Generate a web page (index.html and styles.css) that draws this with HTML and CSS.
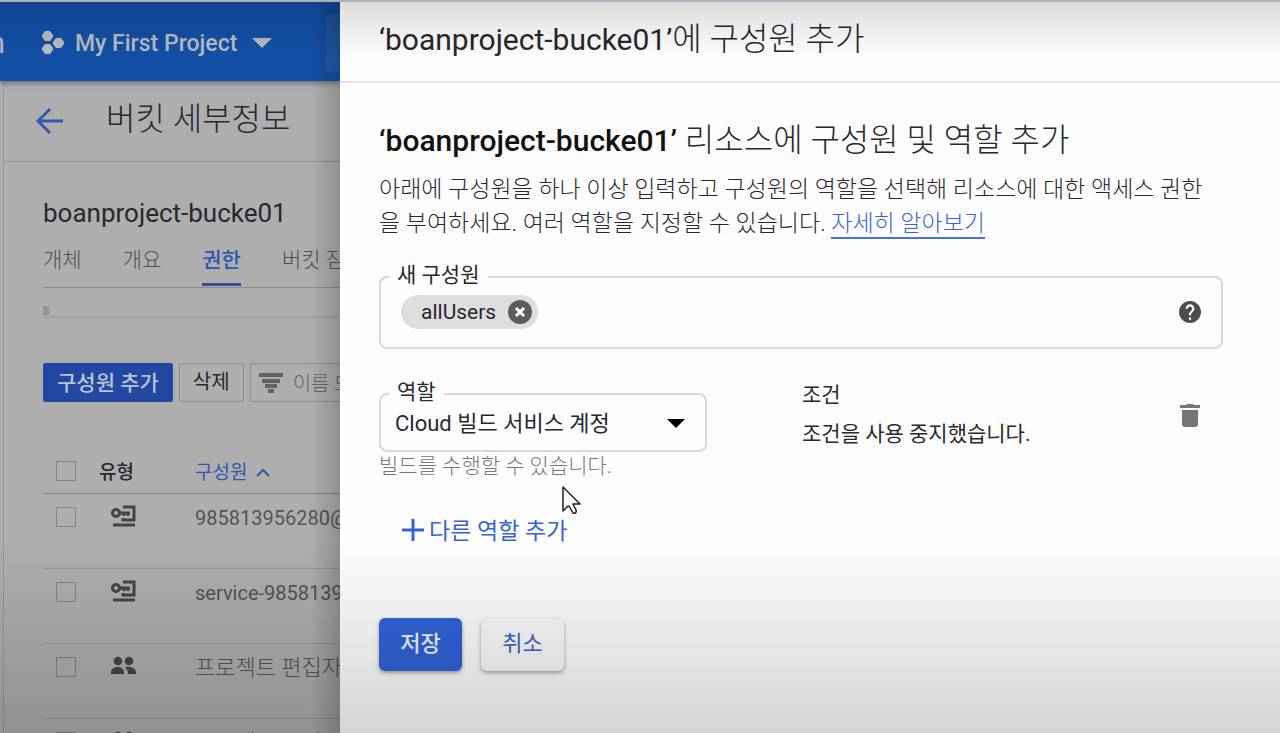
FILE: index.html
```html
<!DOCTYPE html>
<html lang="ko">
<head>
    <meta charset="UTF-8">
    <meta name="viewport" content="width=device-width, initial-scale=1.0">
    <title>버킷 세부정보</title>
    <link rel="stylesheet" href="styles.css">
</head>
<body>
    <div class="console">
        <header class="topbar">
            <span class="logo">Google Cloud Platform</span>
            <button type="button" class="project">
                <svg width="22" height="24" viewBox="0 0 22 24" fill="currentColor"><path d="M3 0h5l3 4v2l-3 4H3L0 6V4zM3 13h5l3 4v2l-3 4H3l-3-4v-2zM14 7h5l3 4v2l-3 4h-5l-3-4v-2z"/></svg>
                My First Project
                <svg class="caret" width="20" height="10" viewBox="0 0 20 10" fill="currentColor"><path d="M0 0h20L10 10z"/></svg>
            </button>
            <div class="search"></div>
        </header>
        <div class="content">
            <div class="titlebar">
                <a href="#" class="back" aria-label="뒤로"><svg width="28" height="26" viewBox="0 0 28 26" fill="none" stroke="currentColor" stroke-width="3"><path d="M27 13H3M14 1L2 13l12 12"/></svg></a>
                <h1>버킷 세부정보</h1>
            </div>
            <main>
                <h2 class="bucket">boanproject-bucke01</h2>
                <nav class="tabs">
                    <a href="#">개체</a>
                    <a href="#">개요</a>
                    <a href="#" class="active">권한</a>
                    <a href="#">버킷 잠금</a>
                </nav>
                <div class="strip"></div>
                <div class="toolbar">
                    <button type="button" class="add">구성원 추가</button>
                    <button type="button">삭제</button>
                    <button type="button" class="filter">
                        <svg width="24" height="20" viewBox="0 0 24 20" stroke="currentColor" stroke-width="4"><path d="M0 2h24M3 8h18M6 13h12M9 18h6"/></svg>
                        이름 또는 역할
                    </button>
                </div>
                <table class="members">
                    <thead>
                        <tr>
                            <th class="check"><input type="checkbox" aria-label="모두 선택"></th>
                            <th class="type">유형</th>
                            <th class="name">구성원 <svg width="14" height="9" viewBox="0 0 14 9" fill="none" stroke="currentColor" stroke-width="2"><path d="M1 8l6-6 6 6"/></svg></th>
                        </tr>
                    </thead>
                    <tbody>
                        <tr>
                            <td><input type="checkbox" aria-label="985813956280 선택"></td>
                            <td class="icon"><svg width="25" height="22" viewBox="0 0 25 22" fill="none" stroke="currentColor" stroke-width="3"><circle cx="5" cy="8" r="3.5"/><path d="M8 8h11M13 8v3M17 8v3M12 2h11v13H12v-2M2 20h22"/></svg></td>
                            <td>985813956280@cloudbuild</td>
                        </tr>
                        <tr>
                            <td><input type="checkbox" aria-label="service-985813956280 선택"></td>
                            <td class="icon"><svg width="25" height="22" viewBox="0 0 25 22" fill="none" stroke="currentColor" stroke-width="3"><circle cx="5" cy="8" r="3.5"/><path d="M8 8h11M13 8v3M17 8v3M12 2h11v13H12v-2M2 20h22"/></svg></td>
                            <td>service-985813956280</td>
                        </tr>
                        <tr>
                            <td><input type="checkbox" aria-label="프로젝트 편집자 선택"></td>
                            <td class="icon"><svg width="25" height="22" viewBox="0 0 25 22" fill="currentColor"><circle cx="7" cy="6" r="4.3"/><circle cx="18" cy="6" r="4.3"/><path d="M0 19v-2c0-3 3-5 6.500-5s6.500 2 6.500 5v2zM14 12c7-1 11 2 11 5v2h-8c0-3-1-5-3-7z"/></svg></td>
                            <td class="group">프로젝트 편집자</td>
                        </tr>
                        <tr>
                            <td><input type="checkbox" aria-label="프로젝트 뷰어 선택"></td>
                            <td class="icon"><svg width="25" height="22" viewBox="0 0 25 22" fill="currentColor"><circle cx="7" cy="6" r="4.3"/><circle cx="18" cy="6" r="4.3"/><path d="M0 19v-2c0-3 3-5 6.500-5s6.500 2 6.500 5v2zM14 12c7-1 11 2 11 5v2h-8c0-3-1-5-3-7z"/></svg></td>
                            <td class="group">프로젝트 뷰어</td>
                        </tr>
                    </tbody>
                </table>
            </main>
        </div>
    </div>

    <aside class="drawer">
        <header class="drawer-header">
            <h2><span class="res">‘boanproject-bucke01’</span>에 구성원 추가</h2>
        </header>
        <form class="drawer-body">
            <h3><strong class="res">‘boanproject-bucke01’</strong> 리소스에 구성원 및 역할 추가</h3>
            <p class="desc">아래에 구성원을 하나 이상 입력하고 구성원의 역할을 선택해 리소스에 대한 액세스 권한을 부여하세요. 여러 역할을 지정할 수 있습니다. <a href="#">자세히 알아보기</a></p>

            <fieldset class="field">
                <legend><label for="member">새 구성원</label></legend>
                <div class="chips">
                    <span class="chip">allUsers
                        <button type="button" aria-label="삭제"><svg width="24" height="24" viewBox="0 0 24 24"><circle cx="12" cy="12" r="12" fill="#5c5c5e"/><path d="M8 8l8 8M16 8l-8 8" stroke="#fff" stroke-width="3"/></svg></button>
                    </span>
                    <input type="text" id="member">
                    <button type="button" aria-label="도움말"><svg width="22" height="22" viewBox="2 2 20 20" fill="#4d4d4f"><path d="M12 2C6.48 2 2 6.48 2 12s4.48 10 10 10 10-4.48 10-10S17.52 2 12 2zm1 17h-2v-2h2v2zm2.07-7.75l-.9.92C13.45 12.9 13 13.5 13 15h-2v-.5c0-1.1.45-2.1 1.17-2.83l1.24-1.26c.37-.36.59-.86.59-1.41 0-1.1-.9-2-2-2s-2 .9-2 2H8c0-2.21 1.79-4 4-4s4 1.79 4 4c0 .88-.36 1.68-.93 2.25z"/></svg></button>
                </div>
            </fieldset>

            <div class="role-row">
                <div>
                    <fieldset class="field">
                        <legend><label for="role">역할</label></legend>
                        <div class="select">
                            <select id="role">
                                <option>Cloud 빌드 서비스 계정</option>
                            </select>
                            <svg width="18" height="9" viewBox="0 0 18 9"><path d="M0 0h18L9 9z"/></svg>
                        </div>
                    </fieldset>
                    <p class="hint">빌드를 수행할 수 있습니다.</p>
                </div>
                <div class="condition">
                    <h4>조건</h4>
                    <p>조건을 사용 중지했습니다.</p>
                </div>
                <button type="button" class="trash" aria-label="역할 삭제"><svg width="22" height="24" viewBox="0 0 22 24" fill="#757577"><path d="M1 2h6l1-1h6l1 1h6v3H1zM3 7h16v14c0 2-1 3-3 3H6c-2 0-3-1-3-3z"/></svg></button>
            </div>

            <button type="button" class="add-role">
                <svg width="22" height="22" viewBox="0 0 22 22" stroke="currentColor" stroke-width="3"><path d="M11 0v22M0 11h22"/></svg>
                <span>다른 역할 추가</span>
            </button>

            <div class="actions">
                <button type="submit" class="save">저장</button>
                <button type="button" class="cancel">취소</button>
            </div>
        </form>
    </aside>

    <svg class="cursor" width="20" height="30" viewBox="0 0 20 30" fill="#fff" stroke="#222" stroke-width="1.5" stroke-linejoin="round"><path d="M2 2v24l5-5h1l4 7c2 1 4-1 3-3l-3-6h7z"/></svg>
</body>
</html>
```
FILE: styles.css
```css
* {
    box-sizing: border-box;
}
body {
    margin: 0;
    height: 100vh;
    overflow: hidden;
    display: grid;
    grid-template-columns: 340px 1fr;
    border-top: 2px solid #c6cad1;
    font-family: Roboto, "Noto Sans CJK KR", sans-serif;
    font-size: 21px;
    color: #28292c;
    background: #fdfdfe;
}
/* shading at the top and bottom edges */
body::after {
    content: "";
    position: fixed;
    inset: 0;
    pointer-events: none;
    background:
        linear-gradient(rgba(0, 0, 0, 0.13), transparent 56px),
        linear-gradient(transparent 74%, rgba(0, 0, 0, 0.05) 82%, rgba(0, 0, 0, 0.16));
}
h1, h2, h3, h4, p {
    margin: 0;
    font-weight: 400;
}
button, input, select {
    font: inherit;
    color: inherit;
}
button {
    padding: 0;
    border: none;
    background: none;
    cursor: pointer;
}
a {
    color: inherit;
    text-decoration: none;
}
svg {
    display: block;
    flex: none;
}

/* page behind the drawer */
.console {
    position: relative;
    min-width: 0;
    overflow: hidden;
    background: #aeaeaf;
    white-space: nowrap;
}
.console::after {
    content: "";
    position: absolute;
    inset: 0;
    pointer-events: none;
    background: linear-gradient(to left, rgba(0, 0, 0, 0.18), transparent 30px);
}
.topbar {
    position: relative;
    display: flex;
    align-items: center;
    gap: 37px;
    height: 79px;
    padding-top: 3px;
    background: #1350a5;
    box-shadow: 0 2px 6px rgba(0, 0, 0, 0.4);
    color: #b8bbc3;
}
.logo {
    flex: none;
    display: flex;
    justify-content: flex-end;
    width: 5px;
    overflow: hidden;
    font-size: 29px;
}
.project {
    flex: none;
    display: flex;
    align-items: center;
    gap: 11px;
    font-size: 23px;
    font-weight: 500;
}
.project .caret {
    margin-left: 4px;
}
.search {
    flex: none;
    width: 300px;
    height: 58px;
    margin-left: 17px;
    background: rgba(255, 255, 255, 0.06);
    border-radius: 4px;
}
.content {
    height: 100%;
    margin-left: 3px;
    border-left: 1px solid #98989a;
}
.titlebar {
    display: flex;
    align-items: center;
    gap: 42px;
    height: 81px;
    padding-left: 32px;
    border-bottom: 1px solid #929294;
}
.titlebar h1 {
    padding-bottom: 4px;
    font-size: 32px;
    font-weight: 300;
    line-height: 36px;
}
.back {
    color: #3359af;
}
main {
    padding: 34px 0 0 39px;
}
.bucket {
    font-size: 26px;
    line-height: 34px;
}
.tabs {
    display: flex;
    gap: 41px;
    height: 58px;
    padding-top: 16px;
    border-bottom: 1px solid #8c8c8e;
    color: #505154;
    font-weight: 300;
    line-height: 28px;
}
.tabs .active {
    height: 40px;
    color: #2f56b3;
    font-weight: 500;
    border-bottom: 3px solid #2f4f9b;
}
.strip {
    height: 30px;
    border-bottom: 2px solid #a2a2a4;
    background: linear-gradient(#939395, #939395) 0 18px / 6px 9px no-repeat;
}
.toolbar {
    display: flex;
    gap: 6px;
    margin: 45px 0 49px;
    font-size: 20px;
}
.toolbar button {
    flex: none;
    height: 39px;
    padding: 0 13px 4px;
    border: 1px solid #8d8d90;
    border-radius: 2px;
}
.toolbar .add {
    border-color: #2348a4;
    background: #2348a4;
    color: #bdc3d1;
    font-size: 21px;
    font-weight: 500;
}
.toolbar .filter {
    display: flex;
    align-items: center;
    gap: 10px;
    padding: 0 8px;
    color: #626367;
    font-weight: 300;
}
.members {
    width: 600px;
    table-layout: fixed;
    border-collapse: collapse;
    font-size: 20px;
    text-align: left;
}
.members th {
    height: 42px;
    padding: 0 0 2px;
    border-bottom: 1px solid #858587;
    font-size: 19px;
    font-weight: 500;
}
.members td {
    height: 75px;
    padding: 13px 0 0;
    border-bottom: 1px solid #98989a;
    color: #535457;
    line-height: 22px;
    vertical-align: top;
}
.members .check {
    width: 56px;
}
.members .type {
    width: 96px;
}
.members .name {
    color: #3354ac;
    font-weight: 400;
}
.members .name svg {
    display: inline-block;
    margin-left: 4px;
    vertical-align: 2px;
}
.members .icon {
    padding: 11px 0 0 12px;
    color: #454548;
}
.members .group {
    font-size: 22px;
    font-weight: 300;
}
.members input {
    appearance: none;
    display: block;
    width: 20px;
    height: 20px;
    margin: 0 0 0 13px;
    border: 1px solid #868688;
}

/* drawer */
.drawer {
    min-width: 0;
    background: #fdfdfe;
}
.drawer-header {
    display: flex;
    height: 81px;
    padding: 19px 39px 0;
    border-bottom: 2px solid #e4e4e7;
}
.drawer h2, .drawer h3 {
    font-size: 32px;
    font-weight: 300;
    line-height: 36px;
}
.drawer .res {
    font-size: 30px;
    font-weight: 400;
}
.drawer h3 .res {
    font-weight: 500;
    color: #111;
}
.drawer-body {
    padding: 39px 57px 39px 39px;
}
.desc {
    padding-right: 12px;
    margin: 14px 0 24px;
    font-size: 23px;
    font-weight: 300;
    line-height: 34px;
}
.desc a {
    color: #3a62d4;
    border-bottom: 2px solid #4a74dc;
}
.field {
    min-width: 0;
    margin: 0;
    padding: 0 20px 0 8px;
    border: 2px solid #d8d7dc;
    border-radius: 8px;
}
.field legend {
    padding: 0 8px 4px;
    line-height: 20px;
}
.chips {
    display: flex;
    align-items: center;
    height: 58px;
    padding: 0 0 12px 12px;
}
.chips input {
    flex: 1;
    min-width: 0;
    border: none;
    outline: none;
    background: none;
}
.chip {
    display: flex;
    align-items: center;
    gap: 12px;
    height: 34px;
    padding: 0 6px 0 20px;
    border-radius: 17px;
    background: #dededf;
}
.role-row {
    display: grid;
    grid-template-columns: 328px 1fr 22px;
    column-gap: 95px;
    align-items: start;
    margin-top: 33px;
    padding-right: 22px;
}
.select {
    display: flex;
    align-items: center;
    height: 44px;
    padding: 0 0 10px 6px;
}
.select select {
    appearance: none;
    flex: 1;
    min-width: 0;
    padding: 0;
    border: none;
    outline: none;
    background: none;
    font-size: 22px;
}
.hint {
    color: #77787b;
    font-weight: 300;
    line-height: 28px;
}
.condition {
    line-height: 26px;
}
.condition p {
    margin-top: 13px;
}
.trash {
    margin-top: 21px;
}
.add-role {
    display: flex;
    align-items: center;
    gap: 5px;
    height: 34px;
    margin: 33px 0 71px 23px;
    color: #3762d2;
    font-size: 23px;
}
.add-role span {
    padding-bottom: 3px;
}
.actions {
    display: flex;
    gap: 19px;
    font-size: 22px;
    font-weight: 500;
}
.actions button {
    width: 83px;
    height: 53px;
    padding-bottom: 7px;
    border-radius: 6px;
    box-shadow: 0 2px 4px rgba(0, 0, 0, 0.35);
}
.actions .save {
    background: #3163d8;
    color: #f0f4fd;
}
.actions .cancel {
    background: #fafafb;
    color: #3d63bd;
    font-weight: 400;
}

/* mouse pointer */
.cursor {
    position: absolute;
    left: 561px;
    top: 485px;
}
```
